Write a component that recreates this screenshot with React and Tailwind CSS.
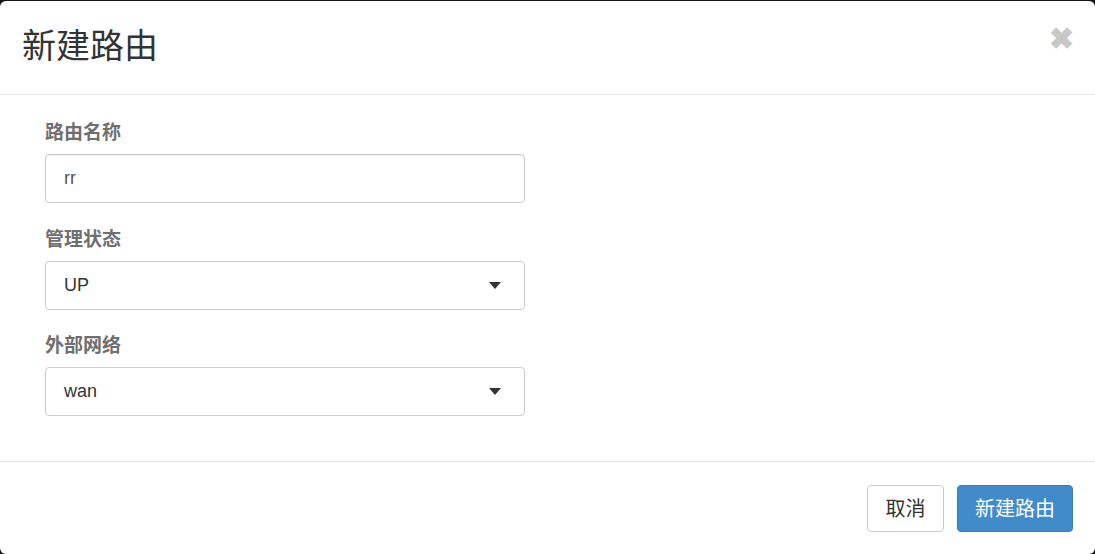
import React from 'react';

const font = { fontFamily: '"Liberation Sans", "Noto Sans CJK SC", sans-serif' };

const Caret = () => (
  <svg width="12" height="7" viewBox="0 0 12 7" className="shrink-0">
    <path d="M0 0 L12 0 L6 7 Z" fill="#333" />
  </svg>
);

const Select = ({ value }) => (
  <div className="w-[480px] h-[49px] border border-[#cccccc] rounded-[4px] flex items-center justify-between pl-[18px] pr-[23px] text-[18px] text-[#333]">
    <span>{value}</span>
    <Caret />
  </div>
);

const Field = ({ label, children, className = '' }) => (
  <div className={className}>
    <label className="block text-[19px] font-bold text-[#6f6f6f] leading-[26px] mb-[8px]">{label}</label>
    {children}
  </div>
);

export default function App() {
  return (
    <div className="w-[1095px] h-[554px] bg-[#141414] pt-px" style={font}>
      <div className="w-full h-[553px] bg-white rounded-[6px] flex flex-col">
        <div className="h-[94px] border-b border-[#e5e5e5] flex items-center justify-between pl-[22px] pr-[21px] shrink-0">
          <h4 className="text-[34px] text-[#333] leading-none -mt-[3px]">新建路由</h4>
          <span className="text-[#c8c8c8] text-[30px] font-bold leading-none self-start mt-[23px]">✖</span>
        </div>
        <div className="flex-1 pl-[45px] pt-[25px]">
          <Field label="路由名称">
            <div className="w-[480px] h-[49px] border border-[#cccccc] rounded-[4px] flex items-center pl-[18px] text-[18px] text-[#555] shadow-[inset_0_1px_1px_rgba(0,0,0,0.075)]">
              rr
            </div>
          </Field>
          <Field label="管理状态" className="mt-[24px]">
            <Select value="UP" />
          </Field>
          <Field label="外部网络" className="mt-[23px]">
            <Select value="wan" />
          </Field>
        </div>
        <div className="h-[93px] border-t border-[#e5e5e5] flex items-start justify-end gap-[13px] pr-[22px] pt-[23px] shrink-0">
          <button className="h-[47px] w-[77px] border border-[#cccccc] rounded-[4px] bg-white text-[20px] text-[#333]">取消</button>
          <button className="h-[47px] w-[116px] border border-[#357ebd] rounded-[4px] bg-[#428bca] text-[20px] text-white">新建路由</button>
        </div>
      </div>
    </div>
  );
}
